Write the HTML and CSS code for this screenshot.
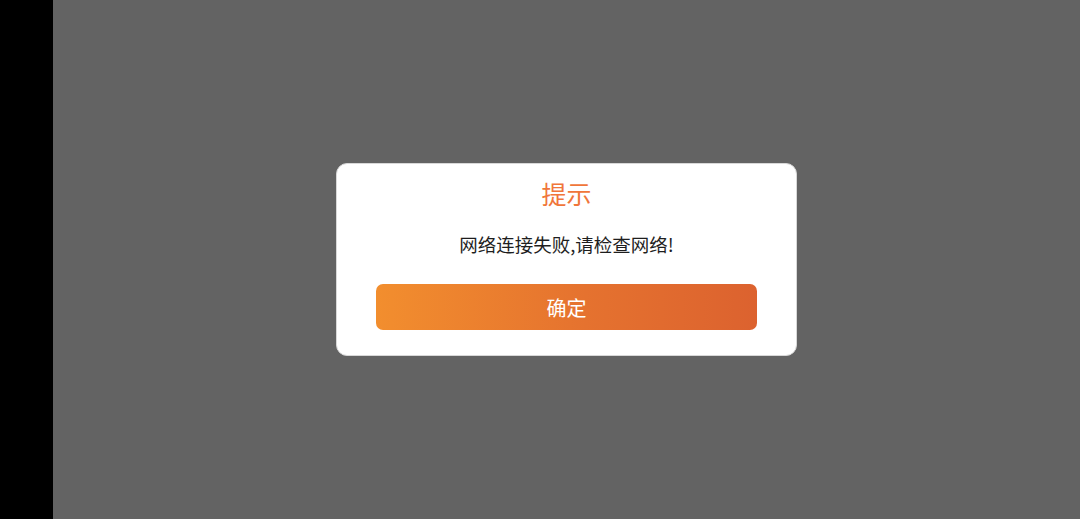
FILE: index.html
```html
<!DOCTYPE html>
<html lang="zh">
<head>
<meta charset="utf-8">
<link rel="stylesheet" href="styles.css">
</head>
<body>
<div class="screen">
  <div class="side"></div>
  <div class="overlay">
    <div class="dialog">
      <div class="title">提示</div>
      <div class="message">网络连接失败,请检查网络!</div>
      <button class="confirm">确定</button>
    </div>
  </div>
</div>
</body>
</html>
```
FILE: styles.css
```css
html, body {
  margin: 0;
  padding: 0;
  height: 100%;
}
body {
  font-family: "Noto Sans CJK SC", "Noto Sans", sans-serif;
  background: #636363;
}
.screen {
  display: flex;
  width: 1080px;
  height: 519px;
}
.side {
  width: 53px;
  background: #000;
  flex: none;
}
.overlay {
  flex: 1;
  background: #636363;
  display: flex;
  align-items: center;
  justify-content: center;
}
.dialog {
  box-sizing: border-box;
  width: 461px;
  height: 193px;
  background: #fff;
  border: 1px solid #d8d8d8;
  border-radius: 11px;
  padding: 13px 39px 25px;
  display: flex;
  flex-direction: column;
  align-items: center;
}
.title {
  font-size: 25px;
  line-height: 32px;
  color: #f0763a;
}
.message {
  margin-top: 22px;
  font-size: 18.5px;
  line-height: 26px;
  color: #1e1e1e;
}
.confirm {
  margin-top: 27px;
  width: 100%;
  height: 46px;
  border: none;
  border-radius: 7px;
  background: linear-gradient(90deg, #f28e2e 0%, #e5722f 55%, #dc622f 100%);
  color: #fff;
  font-family: inherit;
  font-size: 20px;
  padding: 0;
}
```
